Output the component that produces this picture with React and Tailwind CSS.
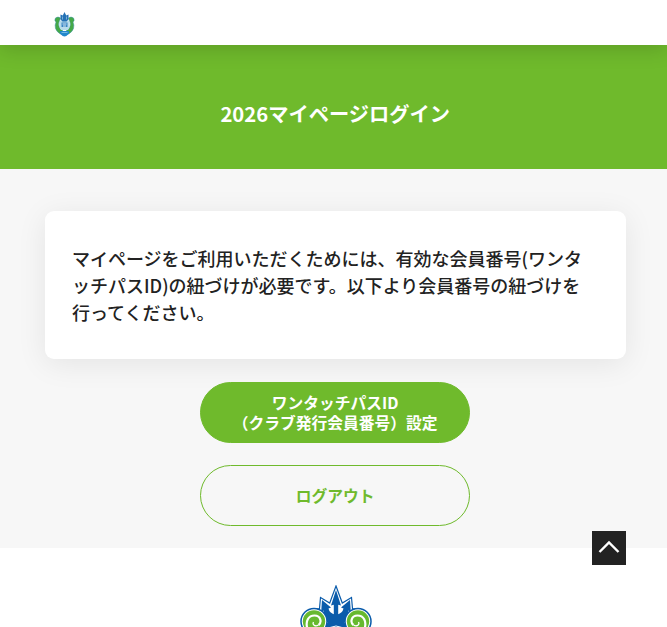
import React from 'react';

const CrestIcon = () => (
    <svg viewBox="0 0 42 50" className="w-[21px] h-[25px]" aria-hidden="true">
        <path d="M3 12 Q8 8 13 12 L11 18 Q7 25 12 33 L18 38 L15 45 Q6 41 3 33 Q1 26 4 20 Q0 17 3 12Z" fill="#45a947" stroke="#3a93a8" strokeWidth="1" />
        <path d="M39 12 Q34 8 29 12 L31 18 Q35 25 30 33 L24 38 L27 45 Q36 41 39 33 Q41 26 38 20 Q42 17 39 12Z" fill="#45a947" stroke="#3a93a8" strokeWidth="1" />
        <path d="M12 17 H30 Q34 27 28 36 H14 Q8 27 12 17Z" fill="#b9dbea" />
        <path d="M21 0 L24.5 7 L29 5 L29 15 L25 19 H17 L13 15 L13 5 L17.5 7Z" fill="#2471b5" />
        <path d="M17 9 V15 M25 9 V15" stroke="#b5d8ea" strokeWidth="1.2" />
        <path d="M15 21 H27 V30 H15Z" fill="#3b86c4" />
        <path d="M17 24 H25 M18 28 H24" stroke="#e7f4fa" strokeWidth="1.8" />
        <path d="M12 38 H30 L30 43 Q25 49 21 49 Q17 49 12 43Z" fill="#2288cc" />
        <path d="M15 41 H27" stroke="#86c5e8" strokeWidth="1.6" />
    </svg>
);

const Scroll = () => (
    <>
        <circle cx="14" cy="36.5" r="13" fill="#fff" stroke="#0b5cab" strokeWidth="1.5" />
        <circle cx="14" cy="36.5" r="11.2" fill="#67b92f" />
        <path d="M7.5 44 C5 36 8.5 30.5 14.5 30.5 C21 30.5 22 37.5 18.5 40" fill="none" stroke="#fff" strokeWidth="2.2" />
        <path d="M18.5 40 C15.5 42 12 40 13.5 37" fill="none" stroke="#fff" strokeWidth="1.3" />
    </>
);

const FooterEmblem = () => (
    <svg viewBox="0 0 72 44" className="w-[72px] h-[44px]" aria-hidden="true">
        {/* Contorno del tridente */}
        <path d="M36 1 L42.3 18 L51.5 12.5 L52.5 23.5 L57 24 L54 44 H18 L15 24 L19.5 23.5 L20.5 12.5 L29.7 18Z" fill="#fff" stroke="#0b5cab" strokeWidth="1.2" />
        {/* Puntas */}
        <path d="M36 5 L41 20.5 L38.2 19.8 V33 H33.8 V19.8 L31 20.5Z" fill="#0b5cab" />
        <path d="M22 15 L31 22.5 L28.5 23.5 Q29.5 28 34.5 29.5 H37.5 Q42.5 28 43.5 23.5 L41 22.5 L50 15 L50.8 27 L48.5 25.5 Q48.5 33 44.5 37.5 L48 44 H24 L27.5 37.5 Q23.5 33 23.5 25.5 L21.2 27Z" fill="#0b5cab" />
        {/* Volutas */}
        <Scroll />
        <g transform="translate(72 0) scale(-1 1)">
            <Scroll />
        </g>
        <path d="M30 42.5 Q36 39.5 42 42.5" fill="none" stroke="#fff" strokeWidth="1" />
    </svg>
);

const Header = () => (
    <header className="relative z-10 h-[45px] bg-white pl-[54px] pt-[12px] shadow-[0_5px_20px_rgba(0,0,0,0.15)]">
        <CrestIcon />
    </header>
);

const App = () => {
    return (
        <div className="h-[627px] overflow-hidden bg-white font-['Noto_Sans_CJK_JP',sans-serif] text-[#222]">
            <Header />

            <div className="flex h-[123.5px] items-center justify-center bg-[#6fba2c] pt-[14.5px] pl-[3.5px]">
                <h1 className="text-[20.25px] font-bold leading-[30px] text-white">2026マイページログイン</h1>
            </div>

            <main className="h-[379px] bg-[#f7f7f7] pl-[44.7px] pt-[42px] pr-[41.5px]">
                <div className="h-[148.5px] rounded-[9px] bg-white pl-[27.3px] pt-[34.5px] shadow-[0_5px_30px_rgba(0,0,0,0.08)]">
                    <p className="text-[18px] font-medium leading-[27px]">
                        マイページをご利用いただくためには、有効な会員番号(ワンタ<br />
                        ッチパスID)の紐づけが必要です。以下より会員番号の紐づけを<br />
                        行ってください。
                    </p>
                </div>

                <div className="mt-[22.5px] flex flex-col items-center gap-[22px]">
                    <button className="h-[61px] w-[270px] rounded-full border border-[#6fba2c] bg-[#6fba2c] pt-[2px] text-[15.75px] font-bold leading-[20px] text-white">
                        <span className="block">ワンタッチパスID</span>
                        <span className="block">（クラブ発行会員番号）設定</span>
                    </button>
                    <button className="h-[61px] w-[270px] rounded-full border border-[#6fba2c] pt-[2px] text-[15.75px] font-bold leading-[20px] text-[#6fba2c]">
                        ログアウト
                    </button>
                </div>
            </main>

            <footer className="relative flex justify-center pt-[37px] pl-[4px]">
                <FooterEmblem />
                {/* Volver arriba */}
                <button aria-label="ページの先頭へ" className="absolute right-[41.5px] -top-[16.5px] flex size-[34px] items-center justify-center bg-[#222]">
                    <svg viewBox="0 0 34 34" className="size-[34px]" fill="none">
                        <path d="M7.5 21 L17 11.5 L26.5 21" stroke="#fff" strokeWidth="2.4" />
                    </svg>
                </button>
            </footer>
        </div>
    );
};

export default App;
